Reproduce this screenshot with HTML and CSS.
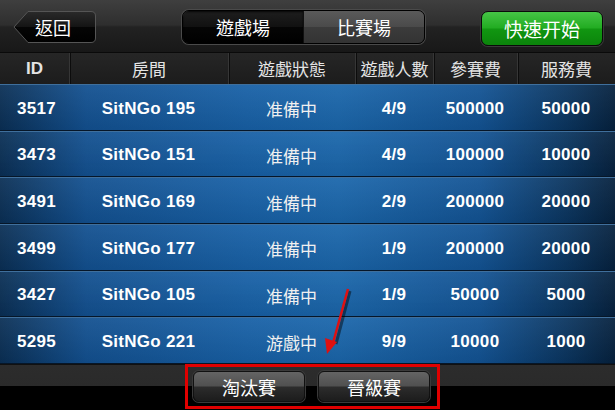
FILE: index.html
```html
<!DOCTYPE html>
<html lang="zh-Hant">
<head>
    <meta charset="UTF-8">
    <title>比賽場</title>
    <link rel="stylesheet" href="styles.css">
</head>
<body>
    <div class="screen">
        <header class="topbar">
            <button class="back">
                <svg class="back-shape" width="84" height="34" viewBox="0 0 84 34">
                    <defs>
                        <linearGradient id="backFill" x1="0" y1="0" x2="0" y2="1">
                            <stop offset="0" stop-color="#2a2a2a"/>
                            <stop offset="0.5" stop-color="#141414"/>
                            <stop offset="0.51" stop-color="#050505"/>
                            <stop offset="1" stop-color="#000"/>
                        </linearGradient>
                    </defs>
                    <path d="M1 17 L15 1.5 H78 Q82.5 1.5 82.5 6 V28 Q82.5 32.5 78 32.5 H15 Z" fill="url(#backFill)" stroke="#555" stroke-width="1"/>
                </svg>
                <span>返回</span>
            </button>
            <div class="segment">
                <button class="seg seg-on">遊戲場</button>
                <button class="seg seg-off">比賽場</button>
            </div>
            <button class="quick">快速开始</button>
        </header>

        <div class="thead">
            <div class="col">ID</div>
            <div class="col">房間</div>
            <div class="col">遊戲狀態</div>
            <div class="col">遊戲人數</div>
            <div class="col">參賽費</div>
            <div class="col">服務費</div>
        </div>

        <div class="rows">
            <div class="row"><span>3517</span><span>SitNGo 195</span><span class="cn">准備中</span><span>4/9</span><span>500000</span><span>50000</span></div>
            <div class="row"><span>3473</span><span>SitNGo 151</span><span class="cn">准備中</span><span>4/9</span><span>100000</span><span>10000</span></div>
            <div class="row"><span>3491</span><span>SitNGo 169</span><span class="cn">准備中</span><span>2/9</span><span>200000</span><span>20000</span></div>
            <div class="row"><span>3499</span><span>SitNGo 177</span><span class="cn">准備中</span><span>1/9</span><span>200000</span><span>20000</span></div>
            <div class="row"><span>3427</span><span>SitNGo 105</span><span class="cn">准備中</span><span>1/9</span><span>50000</span><span>5000</span></div>
            <div class="row"><span>5295</span><span>SitNGo 221</span><span class="cn">游戲中</span><span>9/9</span><span>10000</span><span>1000</span></div>
        </div>

        <footer class="bottombar">
            <div class="mark">
                <button class="tab">淘汰賽</button>
                <button class="tab">晉級賽</button>
            </div>
        </footer>

        <svg class="arrow" width="615" height="410" viewBox="0 0 615 410">
            <line x1="348" y1="289" x2="334" y2="342" stroke="rgba(0,0,0,0.45)" stroke-width="3" transform="translate(2,2)"/>
            <line x1="348" y1="289" x2="333" y2="343" stroke="#e01010" stroke-width="2.5"/>
            <polygon points="327,354 325,338 337,342" fill="#e01010"/>
        </svg>
    </div>
</body>
</html>
```

FILE: styles.css
```css
* {
    box-sizing: border-box;
}
body {
    margin: 0;
    padding: 0;
    background-color: #000;
    font-family: "Liberation Sans", "Noto Sans CJK TC", Arial, sans-serif;
    color: #fff;
}
button {
    font-family: "Noto Sans CJK TC", "Liberation Sans", sans-serif;
    color: #fff;
    cursor: pointer;
    padding: 0;
}
.screen {
    position: relative;
    width: 615px;
    height: 410px;
    overflow: hidden;
    display: flex;
    flex-direction: column;
}

/* top bar */
.topbar {
    height: 53px;
    flex: none;
    display: flex;
    align-items: flex-start;
    padding: 10px 0 0 13px;
    background: linear-gradient(#3f3f3f 0%, #2e2e2e 48%, #222 52%, #181818 100%);
    border-bottom: 1px solid #0a0a0a;
}
.back {
    position: relative;
    width: 84px;
    height: 34px;
    border: none;
    background: none;
    font-size: 18px;
}
.back-shape {
    position: absolute;
    left: 0;
    top: 0;
}
.back span {
    position: relative;
    padding-right: 4px;
}
.segment {
    display: flex;
    margin-left: 85px;
    width: 243px;
    height: 34px;
    border: 1px solid #000;
    border-radius: 7px;
    overflow: hidden;
    box-shadow: 0 0 0 1px #4a4a4a;
}
.seg {
    flex: 1;
    border: none;
    font-size: 18px;
}
.seg-on {
    background: linear-gradient(#1e1e1e 0%, #111 50%, #050505 51%, #000 100%);
    box-shadow: inset 0 1px 2px rgba(0, 0, 0, 0.8);
}
.seg-off {
    border-left: 1px solid #111;
    background: linear-gradient(#5a5a5a 0%, #4a4a4a 50%, #3b3b3b 51%, #333 100%);
}
.quick {
    margin-left: 56px;
    margin-top: 1px;
    width: 122px;
    height: 35px;
    border: 1px solid #0a0a0a;
    border-radius: 7px;
    font-size: 19px;
    background: linear-gradient(#46c446 0%, #22ac22 48%, #119611 52%, #0b840b 100%);
    box-shadow: 0 0 0 1px #3a3a3a;
}

/* table header */
.thead {
    height: 31px;
    flex: none;
    display: grid;
    grid-template-columns: 69px 159px 127px 78px 84px 98px;
    background: linear-gradient(#262626, #1c1c1c);
    font-family: "Noto Sans CJK TC", "Liberation Sans", sans-serif;
    font-size: 17px;
    color: #e4e4e4;
}
.col {
    display: flex;
    align-items: center;
    justify-content: center;
    border-left: 1px solid #363636;
    box-shadow: inset 1px 0 0 #0c0c0c;
}
.col:first-child {
    border-left: none;
    box-shadow: none;
    font-family: "Liberation Sans", sans-serif;
    font-weight: bold;
}

/* rows */
.rows {
    height: 280px;
    flex: none;
    display: grid;
    grid-template-rows: repeat(6, 1fr);
}
.row {
    display: grid;
    grid-template-columns: 69px 159px 127px 78px 84px 98px;
    align-items: center;
    padding-top: 3px;
    background:
        linear-gradient(rgba(255, 255, 255, 0.06), rgba(0, 0, 0, 0.08)),
        linear-gradient(to right, #0a2f55 0%, #125090 14%, #1760a6 40%, #1a66ab 55%, #125394 78%, #0a3560 92%, #05213e 100%);
    border-top: 1px solid #3f6f9c;
    border-bottom: 1px solid #061628;
    font-size: 17px;
    font-weight: bold;
    letter-spacing: 0.3px;
    text-align: center;
}
.row span:first-child {
    padding-left: 4px;
}
.row .cn {
    font-family: "Noto Sans CJK TC", sans-serif;
    font-weight: normal;
    letter-spacing: 0;
    color: #f0f0f0;
}

/* bottom bar */
.bottombar {
    flex: 1;
    background: linear-gradient(#2c2c2c 0, #2a2a2a 21px, #000 21px);
    padding: 0 0 0 185px;
    border-top: 1px solid #111;
}
.mark {
    width: 255px;
    height: 45px;
    margin-top: -1px;
    border: 3px solid #e00000;
    display: flex;
    align-items: center;
    padding: 0 0 0 5px;
    gap: 13px;
}
.tab {
    width: 112px;
    height: 31px;
    border: 1px solid #111;
    border-radius: 6px;
    font-size: 18px;
    background: linear-gradient(#646464 0%, #505050 48%, #2c2c2c 52%, #1c1c1c 100%);
    box-shadow: 0 0 0 1px #3a3a3a;
}

/* annotation arrow */
.arrow {
    position: absolute;
    left: 0;
    top: 0;
    pointer-events: none;
}
```
